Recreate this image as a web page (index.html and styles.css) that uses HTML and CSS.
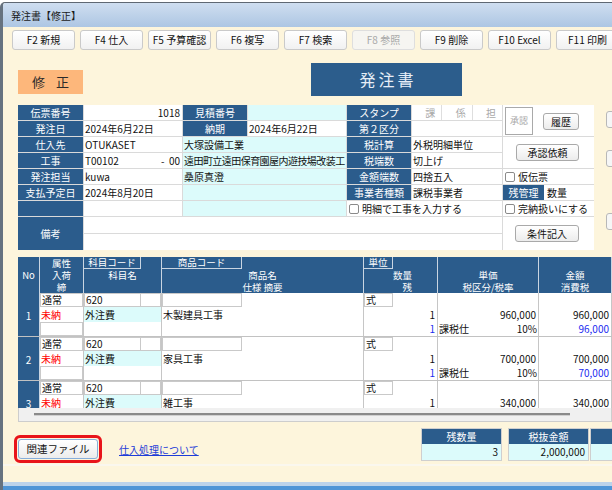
FILE: index.html
```html
<!DOCTYPE html>
<html lang="ja">
<head>
<meta charset="utf-8">
<title>発注書【修正】</title>
<link rel="stylesheet" href="styles.css">
</head>
<body>
<div class="window">
  <div class="titlebar">発注書【修正】</div>
  <div class="toolbar">
    <div class="tbtn">F2 新規</div>
    <div class="tbtn">F4 仕入</div>
    <div class="tbtn">F5 予算確認</div>
    <div class="tbtn">F6 複写</div>
    <div class="tbtn">F7 検索</div>
    <div class="tbtn disabled">F8 参照</div>
    <div class="tbtn">F9 削除</div>
    <div class="tbtn">F10 Excel</div>
    <div class="tbtn">F11 印刷</div>
  </div>
  <div class="main">
    <div class="top-row">
      <div class="mode">修正</div>
      <div class="doc-title">発注書</div>
    </div>
    <div class="form-row">
      <div class="form">
        <!-- row 1 -->
        <div class="lbl">伝票番号</div>
        <div class="v r">1018</div>
        <div class="lbl">見積番号</div>
        <div class="v cy"></div>
        <div class="lbl">スタンプ</div>
        <div class="v stamp"><span>課</span><span>係</span><span>担</span></div>
        <div class="side r12">
          <div class="approve">承認</div>
          <div class="btn b-rireki">履歴</div>
        </div>
        <!-- row 2 -->
        <div class="lbl">発注日</div>
        <div class="v">2024年6月22日</div>
        <div class="lbl">納期</div>
        <div class="v">2024年6月22日</div>
        <div class="lbl">第２区分</div>
        <div class="v"></div>
        <!-- row 3 -->
        <div class="lbl">仕入先</div>
        <div class="v">OTUKASET</div>
        <div class="v cy span2">大塚設備工業</div>
        <div class="lbl">税計算</div>
        <div class="v">外税明細単位</div>
        <div class="side r34">
          <div class="btn b-irai">承認依頼</div>
        </div>
        <!-- row 4 -->
        <div class="lbl">工事</div>
        <div class="v split"><span>T00102</span><span>-&nbsp;&nbsp;00</span></div>
        <div class="v cy span2 tight">遠田町立遠田保育園屋内遊技場改装工</div>
        <div class="lbl">税端数</div>
        <div class="v">切上げ</div>
        <!-- row 5 -->
        <div class="lbl">発注担当</div>
        <div class="v">kuwa</div>
        <div class="v cy span2">桑原真澄</div>
        <div class="lbl">金額端数</div>
        <div class="v">四捨五入</div>
        <div class="v chk"><span class="cb"></span>仮伝票</div>
        <!-- row 6 -->
        <div class="lbl">支払予定日</div>
        <div class="v">2024年8月20日</div>
        <div class="v cy span2"></div>
        <div class="lbl">事業者種類</div>
        <div class="v">課税事業者</div>
        <div class="v zan"><span class="lbl zl">残管理</span><span>数量</span></div>
        <!-- row 7 -->
        <div class="lbl"></div>
        <div class="v"></div>
        <div class="v cy span2"></div>
        <div class="v chk span2"><span class="cb"></span>明細で工事を入力する</div>
        <div class="v chk"><span class="cb"></span>完納扱いにする</div>
        <!-- rows 8-9 -->
        <div class="lbl biko">備考</div>
        <div class="v span5"></div>
        <div class="side r89">
          <div class="btn b-joken">条件記入</div>
        </div>
        <div class="v span5"></div>
      </div>
      <div class="cut">
        <div class="cbtn c1"></div>
        <div class="cbtn c2"></div>
        <div class="cbtn c3"></div>
      </div>
    </div>

    <div class="detail">
      <div class="dh">
        <div class="w-no hno">No</div>
        <div class="w-at hl">
          <div class="ln">属性</div><div class="ln">入荷</div><div class="ln">締</div>
        </div>
        <div class="w-km hl">
          <div class="sub sub-km">科目コード</div><div class="ln">科目名</div>
        </div>
        <div class="w-sh hl">
          <div class="sub sub-sh">商品コード</div><div class="ln">商品名</div><div class="ln">仕様 摘要</div>
        </div>
        <div class="w-tn hl">
          <div class="sub sub-tn">単位</div><div class="ln rt">数量</div><div class="ln rt">残</div>
        </div>
        <div class="w-tk hl">
          <div class="ln"></div><div class="ln">単価</div><div class="ln">税区分/税率</div>
        </div>
        <div class="w-kg hl">
          <div class="ln"></div><div class="ln">金額</div><div class="ln">消費税</div>
        </div>
        <div class="w-ex hl"></div>
      </div>
      <div class="db">
        <div class="item">
          <div class="c w-no no">1</div>
          <div class="c w-at"><div class="s1 bx">通常</div><div class="s2 red">未納</div><div class="s3 bx"></div></div>
          <div class="c w-km"><div class="s1 f"><span class="bx k1">620</span><span class="bx k2"></span></div><div class="s2 cy">外注費</div><div class="s3"></div></div>
          <div class="c w-sh"><div class="s1"><span class="bx p1"></span></div><div class="s2">木製建具工事</div><div class="s3"></div></div>
          <div class="c w-tn"><div class="s1"><span class="bx u1">式</span></div><div class="s2 r">1</div><div class="s3 r blue">1</div></div>
          <div class="c w-tk"><div class="s1"></div><div class="s2 r num">960,000</div><div class="s3 split"><span>課税仕</span><span class="num">10%</span></div></div>
          <div class="c w-kg"><div class="s1"></div><div class="s2 r num">960,000</div><div class="s3 r num blue">96,000</div></div>
        </div>
        <div class="item">
          <div class="c w-no no">2</div>
          <div class="c w-at"><div class="s1 bx">通常</div><div class="s2 red">未納</div><div class="s3 bx"></div></div>
          <div class="c w-km"><div class="s1 f"><span class="bx k1">620</span><span class="bx k2"></span></div><div class="s2 cy">外注費</div><div class="s3"></div></div>
          <div class="c w-sh"><div class="s1"><span class="bx p1"></span></div><div class="s2">家具工事</div><div class="s3"></div></div>
          <div class="c w-tn"><div class="s1"><span class="bx u1">式</span></div><div class="s2 r">1</div><div class="s3 r blue">1</div></div>
          <div class="c w-tk"><div class="s1"></div><div class="s2 r num">700,000</div><div class="s3 split"><span>課税仕</span><span class="num">10%</span></div></div>
          <div class="c w-kg"><div class="s1"></div><div class="s2 r num">700,000</div><div class="s3 r num blue">70,000</div></div>
        </div>
        <div class="item">
          <div class="c w-no no">3</div>
          <div class="c w-at"><div class="s1 bx">通常</div><div class="s2 red">未納</div><div class="s3 bx"></div></div>
          <div class="c w-km"><div class="s1 f"><span class="bx k1">620</span><span class="bx k2"></span></div><div class="s2 cy">外注費</div><div class="s3"></div></div>
          <div class="c w-sh"><div class="s1"><span class="bx p1"></span></div><div class="s2">雑工事</div><div class="s3"></div></div>
          <div class="c w-tn"><div class="s1"><span class="bx u1">式</span></div><div class="s2 r">1</div><div class="s3 r blue">1</div></div>
          <div class="c w-tk"><div class="s1"></div><div class="s2 r num">340,000</div><div class="s3 split"><span>課税仕</span><span class="num">10%</span></div></div>
          <div class="c w-kg"><div class="s1"></div><div class="s2 r num">340,000</div><div class="s3 r num blue">34,000</div></div>
        </div>
      </div>
      <div class="hs"><div class="thumb"></div></div>
    </div>

    <div class="bottom">
      <div class="focus-ring"><div class="btn b-file">関連ファイル</div></div>
      <a class="link" href="#">仕入処理について</a>
      <div class="sums">
        <div class="sum s-zan"><div class="sh">残数量</div><div class="sv">3</div></div>
        <div class="sum s-zei"><div class="sh">税抜金額</div><div class="sv">2,000,000</div></div>
        <div class="sum s-tot"><div class="sh">消費税</div><div class="sv">200,000</div></div>
      </div>
    </div>
    <div class="status"></div>
  </div>
  <div class="frame-bottom"></div>
</div>
</body>
</html>
```

FILE: styles.css
```css
* { box-sizing: border-box; }
html, body { margin: 0; padding: 0; }
body {
  width: 612px;
  height: 490px;
  overflow: hidden;
  background: #ffffff;
  font-family: "Noto Sans CJK JP", "Noto Sans", sans-serif;
  font-size: 10px;
  color: #111;
}
.window {
  margin-top: 2px;
  height: 488px;
  border-top: 1px solid #5f6873;
  border-left: 3px solid #66727f;
  border-top-left-radius: 5px;
  background: #fdf5dc;
  display: flex;
  flex-direction: column;
  overflow: hidden;
}
.titlebar {
  flex: none;
  height: 24px;
  background: linear-gradient(#cfdef0, #adc6e3);
  padding: 2px 0 0 8px;
  line-height: 22px;
  font-size: 10px;
  color: #1a1a1a;
}
.toolbar {
  flex: none;
  height: 27px;
  display: flex;
  gap: 5px;
  padding: 3px 0 0 9px;
  overflow: hidden;
}
.tbtn {
  flex: none;
  width: 63px;
  height: 20px;
  border: 1px solid #cacaca;
  border-radius: 3px;
  background: linear-gradient(#ffffff, #f1f1f1);
  text-align: center;
  line-height: 18px;
  font-size: 10px;
  color: #111;
}
.tbtn.disabled { color: #a8a8a8; background: #f6f5f1; border-color: #dedede; }

.main {
  flex: 1;
  min-height: 0;
  padding-left: 15px;
  display: flex;
  flex-direction: column;
}
.top-row {
  flex: none;
  height: 51px;
  padding-top: 9px;
  display: flex;
  align-items: flex-start;
}
.mode {
  width: 65px;
  height: 24px;
  margin-top: 7px;
  background: #fdb77b;
  color: #2a2a2a;
  font-size: 13px;
  line-height: 24px;
  letter-spacing: 11px;
  padding-left: 11px;
  text-align: center;
}
.doc-title {
  margin-left: 228px;
  width: 151px;
  height: 33px;
  background: #2c5d8c;
  color: #e6eef7;
  font-size: 16px;
  letter-spacing: 3px;
  padding-left: 3px;
  line-height: 33px;
  text-align: center;
}

.form-row { flex: none; display: flex; }
.form {
  flex: none;
  display: grid;
  grid-template-columns: 65px 98px 64px 98px 64px 90px 91px;
  grid-template-rows: repeat(7, 15px) 16px 16px;
  gap: 1px;
  background: #dadada;
  width: 576px;
}
.lbl {
  background: #2b5c8c;
  color: #ffffff;
  text-align: center;
  line-height: 15px;
  white-space: nowrap;
  overflow: hidden;
}
.v {
  background: #ffffff;
  line-height: 15px;
  padding: 0 1px;
  white-space: nowrap;
  overflow: hidden;
}
.v.r { text-align: right; padding-right: 2px; }
.cy { background: #dcfbfb; }
.tight { letter-spacing: -0.55px; }
.span2 { grid-column: span 2; }
.span5 { grid-column: span 5; }
.split { display: flex; justify-content: space-between; }
.form .split { padding-right: 2px; }
.stamp { display: flex; padding: 0; }
.stamp span {
  flex: 1;
  text-align: right;
  padding-right: 6px;
  color: #a9a9a9;
  border-left: 1px solid #dedede;
}
.stamp span:first-child { border-left: none; }
.side { background: #ffffff; grid-column: 7; display: flex; align-items: center; }
.r12 { grid-row: 1 / 3; align-items: flex-start; }
.r34 { grid-row: 3 / 5; }
.r89 { grid-row: 8 / 10; }
.approve {
  width: 28px;
  height: 28px;
  margin: 2px 0 0 2px;
  border: 1px solid #a9a9a9;
  color: #a9a9a9;
  font-size: 9px;
  line-height: 26px;
  text-align: center;
}
.btn {
  border: 1px solid #a9a9a9;
  border-radius: 3px;
  background: linear-gradient(#ffffff, #ececec);
  text-align: center;
  line-height: 15px;
  height: 17px;
  font-size: 10px;
  color: #111;
}
.b-rireki { width: 36px; margin: 8px 0 0 10px; }
.b-irai { width: 63px; margin-left: 13px; }
.b-joken { width: 64px; margin-left: 12px; }
.chk { display: flex; align-items: center; padding-left: 2px; }
.cb {
  width: 10px;
  height: 10px;
  border: 1px solid #8a8a8a;
  border-radius: 2px;
  background: #fff;
  margin-right: 3px;
  flex: none;
}
.zan { display: flex; padding: 0; }
.zl { width: 41px; flex: none; margin-right: 3px; }
.biko { grid-row: 8 / 10; display: flex; align-items: center; justify-content: center; }

.cut { margin-left: 12px; display: flex; flex-direction: column; }
.cbtn {
  width: 30px;
  height: 17px;
  border: 1px solid #b8b8b8;
  border-radius: 3px;
  background: #f6f6f6;
}
.c1 { margin-top: 6px; }
.c2 { margin-top: 22px; }
.c3 { margin-top: 46px; }

.detail { flex: none; margin-top: 7px; width: 594px; overflow: hidden; }
.dh {
  display: flex;
  height: 36px;
  background: #2b5c8c;
  color: #ffffff;
  width: 640px;
  font-size: 9.5px;
}
.dh > div { flex: none; border-right: 1px solid #c9d5e2; height: 36px; }
.w-no { width: 22px; flex: none; }
.w-at { width: 44px; flex: none; }
.w-km { width: 78px; flex: none; }
.w-sh { width: 202px; flex: none; }
.w-tn { width: 74px; flex: none; }
.w-tk { width: 101px; flex: none; }
.w-kg { width: 73px; flex: none; }
.w-ex { width: 46px; flex: none; }
.hno { display: flex; align-items: center; justify-content: center; }
.ln { height: 12px; line-height: 12px; text-align: center; white-space: nowrap; }
.ln.rt { text-align: right; padding-right: 25px; }
.sub {
  height: 12px;
  line-height: 11px;
  font-size: 9.5px;
  text-align: center;
  border: 1px solid #c9d5e2;
  border-top: none;
  border-left: none;
  white-space: nowrap;
}
.sub-km { width: 57px; }
.sub-sh { width: 80px; }
.sub-tn { width: 29px; }

.db { height: 115px; overflow: hidden; background: #ffffff; width: 640px; }
.item { display: flex; height: 44px; border-bottom: 1px solid #c2c2c2; }
.c { border-right: 1px solid #c6c6c6; display: flex; flex-direction: column; }
.no {
  background: #2b5c8c;
  color: #ffffff;
  align-items: center;
  justify-content: center;
  border-right-color: #c9d5e2;
  padding-top: 2px;
}
.s1 { height: 14px; line-height: 12px; flex: none; }
.s2 { height: 15px; line-height: 15px; flex: none; padding-left: 1px; white-space: nowrap; }
.s3 { height: 14px; line-height: 14px; flex: none; padding: 0 1px; }
.s2.r, .s3.r { text-align: right; padding-right: 2px; }
.bx {
  display: block;
  height: 14px;
  border: 1px solid #c9c9c9;
  background: #fff;
  padding-left: 1px;
  line-height: 12px;
}
.s1.f { display: flex; }
.k1 { width: 57px; }
.k2 { width: 20px; border-left: none; }
.p1 { width: 80px; }
.u1 { width: 29px; }
.red { color: #ff0000; }
.blue { color: #1c2cf0; }
.s2.cy { background: #dcfbfb; }
.num { font-size: 10px; }

.hs {
  height: 14px;
  background: #f0f0f0;
  border: 1px solid #cdcdcd;
  border-top: none;
  padding: 5px 0 0 15px;
}
.thumb {
  width: 536px;
  height: 3px;
  background: #8a8a8a;
  border-bottom: 1px solid #d0d0d0;
}

.bottom { flex: none; height: 42px; display: flex; align-items: flex-start; }
.focus-ring {
  margin: 13px 0 0 -4px;
  border: 3px solid #e8141a;
  border-radius: 6px;
  padding: 1px;
}
.b-file {
  width: 80px;
  height: 20px;
  line-height: 18px;
  border-color: #86aedb;
  font-size: 10.5px;
}
.link {
  margin: 22px 0 0 17px;
  width: 100px;
  flex: none;
  color: #1d3cd8;
  text-decoration: underline;
  line-height: 12px;
  font-size: 10px;
}
.sums { display: flex; margin: 6px 0 0 202px; flex: none; }
.sum { flex: none; border: 1px solid #cfcfcf; width: 81px; }
.s-zei { margin-left: 6px; width: 81px; }
.s-tot { margin-left: 1px; width: 81px; }
.sum .sh {
  height: 15px;
  background: #2b5c8c;
  color: #ffffff;
  text-align: center;
  line-height: 15px;
}
.sum .sv {
  height: 16px;
  background: #dcfbfb;
  text-align: right;
  padding-right: 3px;
  line-height: 16px;
}
.status {
  flex: 1;
  margin-left: -15px;
  border-top: 2px solid #faf7ee;
}
.frame-bottom {
  flex: none;
  height: 8px;
  margin-left: -3px;
  background: linear-gradient(#bcd3ea 0 4px, #4f95d6 4px);
}
```
